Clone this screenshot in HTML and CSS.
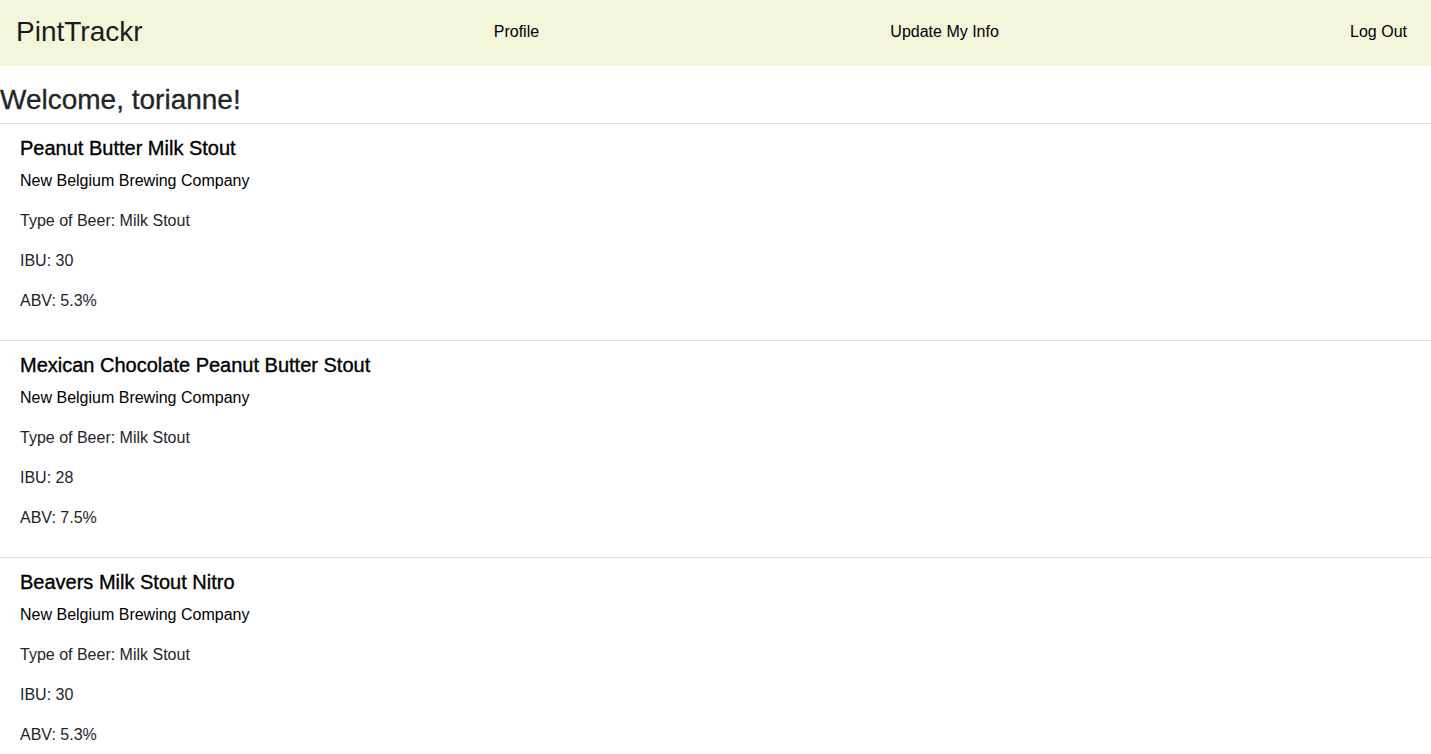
FILE: index.html
```html
<!DOCTYPE html>
<html lang="en">
<head>
<meta charset="utf-8">
<title>PintTrackr</title>
<link rel="stylesheet" href="styles.css">
</head>
<body>
<nav class="navbar">
  <a class="brand" href="#">PintTrackr</a>
  <a class="nav-link" href="#">Profile</a>
  <a class="nav-link" href="#">Update My Info</a>
  <a class="nav-link" href="#">Log Out</a>
</nav>
<h3 class="welcome">Welcome, torianne!</h3>
<div class="beer-list">
  <div class="card">
    <h5 class="card-title">Peanut Butter Milk Stout</h5>
    <h6 class="card-subtitle">New Belgium Brewing Company</h6>
    <p>Type of Beer: Milk Stout</p>
    <p>IBU: 30</p>
    <p>ABV: 5.3%</p>
  </div>
  <div class="card">
    <h5 class="card-title">Mexican Chocolate Peanut Butter Stout</h5>
    <h6 class="card-subtitle">New Belgium Brewing Company</h6>
    <p>Type of Beer: Milk Stout</p>
    <p>IBU: 28</p>
    <p>ABV: 7.5%</p>
  </div>
  <div class="card">
    <h5 class="card-title">Beavers Milk Stout Nitro</h5>
    <h6 class="card-subtitle">New Belgium Brewing Company</h6>
    <p>Type of Beer: Milk Stout</p>
    <p>IBU: 30</p>
    <p>ABV: 5.3%</p>
  </div>
</div>
</body>
</html>
```
FILE: styles.css
```css
* { box-sizing: border-box; }
body {
  margin: 0;
  font-family: "Liberation Sans", Arial, sans-serif;
  font-size: 16px;
  line-height: 24px;
  color: #212529;
  background: #fff;
}
a { text-decoration: none; }
.navbar {
  height: 66px;
  background: #f3f6db;
  display: flex;
  align-items: center;
  justify-content: space-between;
  padding: 0 24px 0 16px;
}
.brand {
  font-size: 28px;
  line-height: 34px;
  color: #1c1c1c;
  margin-top: -2px;
}
.nav-link {
  color: #000;
  font-size: 16px;
  margin-top: -2px;
}
.welcome {
  margin: 17px 0 6px;
  font-size: 28px;
  line-height: 34px;
  font-weight: 500;
  -webkit-text-stroke: 0.3px #212529;
  color: #212529;
}
.card {
  border-top: 1px solid rgba(0, 0, 0, 0.125);
  padding: 12px 20px 11px;
}
.card-title {
  margin: 0 0 9px;
  font-size: 20px;
  line-height: 24px;
  font-weight: 500;
  color: #000;
  -webkit-text-stroke: 0.35px #000;
}
.card-subtitle {
  margin: 0 0 16px;
  font-size: 16px;
  line-height: 24px;
  font-weight: 400;
  color: #000;
}
.card p {
  margin: 0 0 16px;
}
```
